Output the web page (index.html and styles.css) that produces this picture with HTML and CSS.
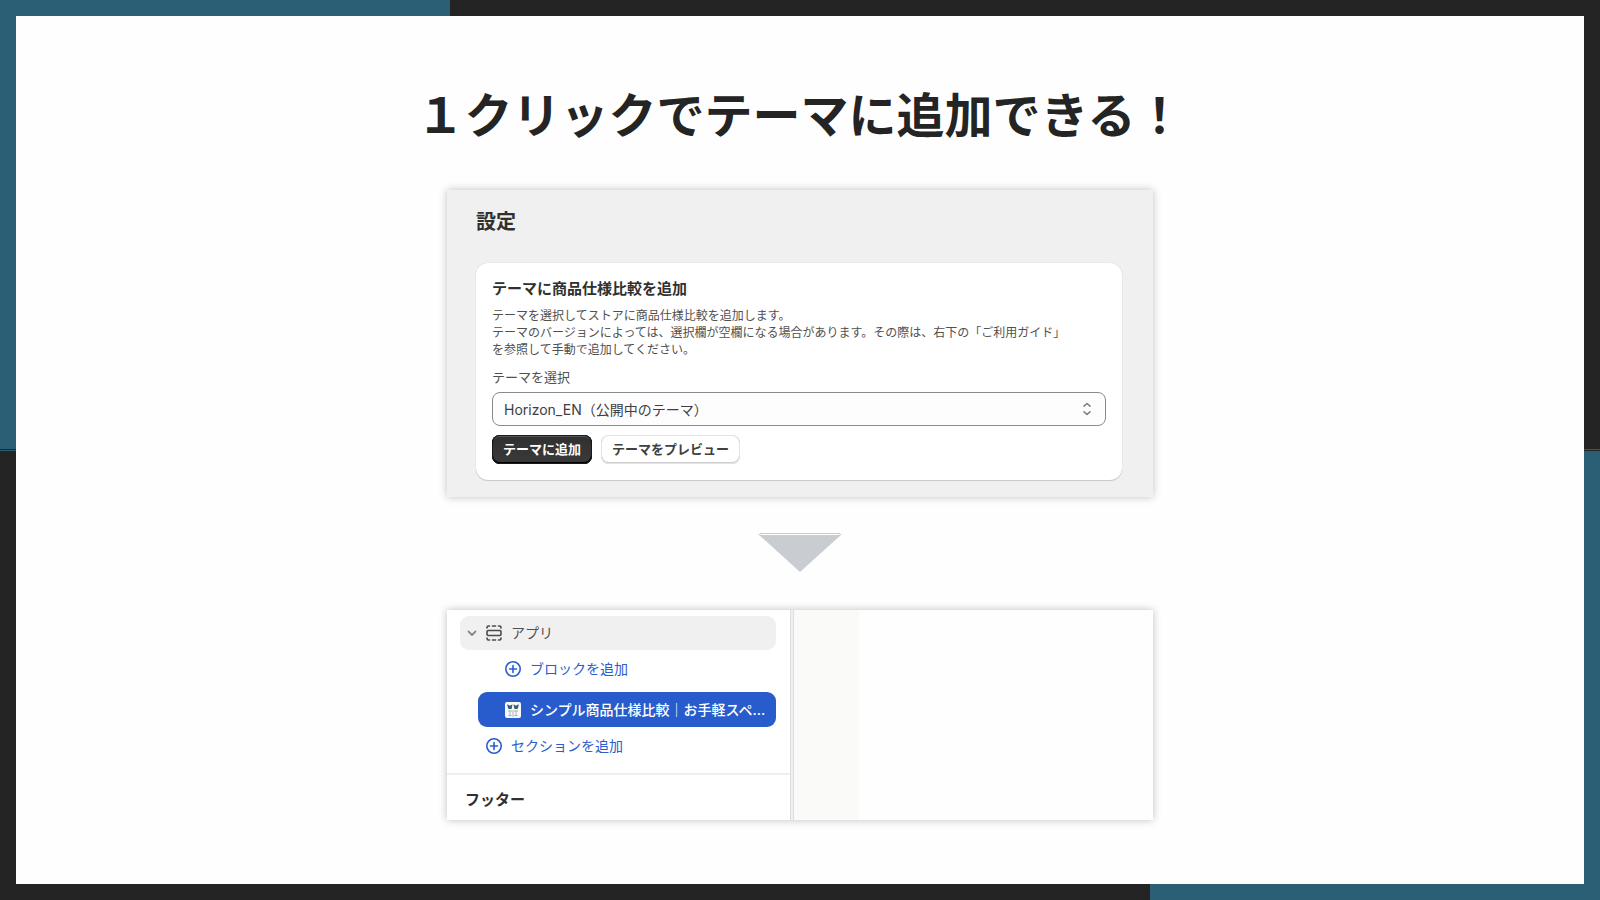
FILE: index.html
```html
<!DOCTYPE html>
<html lang="ja">
<head>
  <meta charset="UTF-8">
  <meta name="viewport" content="width=device-width, initial-scale=1.0">
  <title>１クリックでテーマに追加できる！</title>
  <link rel="stylesheet" href="styles.css">
</head>
<body>
  <main class="slide">
    <h1 class="title">１クリックでテーマに追加できる！</h1>

    <!-- 設定画面 -->
    <section class="panel settings">
      <h2 class="settings-title">設定</h2>
      <div class="card">
        <h3 class="card-title">テーマに商品仕様比較を追加</h3>
        <p class="card-text">テーマを選択してストアに商品仕様比較を追加します。<br>テーマのバージョンによっては、選択欄が空欄になる場合があります。その際は、右下の「ご利用ガイド」<br>を参照して手動で追加してください。</p>
        <label class="label" for="theme">テーマを選択</label>
        <div class="select-wrap">
          <select class="select" id="theme">
            <option>Horizon_EN（公開中のテーマ）</option>
          </select>
          <svg class="select-icon" width="10" height="14" viewBox="0 0 10 14" fill="none" stroke="#808080" stroke-width="1.6" stroke-linecap="round" stroke-linejoin="round">
            <path d="M2 4.2 5 1.5 8 4.2M2 9.8 5 12.5 8 9.8"/>
          </svg>
        </div>
        <div class="buttons">
          <button class="btn btn-dark" type="button">テーマに追加</button>
          <button class="btn" type="button">テーマをプレビュー</button>
        </div>
      </div>
    </section>

    <svg class="arrow" width="84" height="39" viewBox="0 0 84 39" fill="#c9ccd1">
      <path d="M2 0H82V1H2ZM0 1H2L3 2H81L82 1H84L42 39Z"/>
    </svg>

    <!-- テーマエディタ -->
    <section class="panel editor">
      <nav class="sidebar">
        <div class="tree">
          <a href="#app" class="row row-app">
            <svg width="10" height="16" viewBox="0 0 10 16" fill="none" stroke="#8a8a8a" stroke-width="1.8" stroke-linecap="round" stroke-linejoin="round">
              <path d="M1.5 6.5 5 10 8.5 6.5"/>
            </svg>
            <svg width="16" height="16" viewBox="0 0 16 16" fill="none" stroke="#4a4a4a" stroke-width="1.6" stroke-linecap="round">
              <rect x="1" y="5.5" width="14" height="5" rx="1.2"/>
              <path d="M1 3V2.5Q1 1 2.5 1H3.5M6.5 1H9.5M12.5 1H13.5Q15 1 15 2.5V3M1 13V13.5Q1 15 2.5 15H3.5M6.5 15H9.5M12.5 15H13.5Q15 15 15 13.5V13"/>
            </svg>
            <span>アプリ</span>
          </a>
          <a href="#block" class="row row-block">
            <svg width="16" height="16" viewBox="0 0 16 16" fill="none" stroke="#2a5dcf" stroke-width="1.6" stroke-linecap="round">
              <circle cx="8" cy="8" r="7.2"/>
              <path d="M8 4.5V11.5M4.5 8H11.5"/>
            </svg>
            <span>ブロックを追加</span>
          </a>
          <a href="#spec" class="row row-active">
            <svg width="16" height="16" viewBox="0 0 16 16">
              <rect width="16" height="16" rx="2" fill="#f7f8f8"/>
              <path d="M2 2.5 4 3 5 4 6 3 7.5 2.5 6.5 7H3.5ZM8.5 2.5 10 3 11 4 12 3 14 2.5 12.5 7H9.5Z" fill="#2f5d70"/>
              <path d="M3 9H7M3.5 13.500H6.500M9 9H13M9.500 13.500H12.500" stroke="#a5adb2"/>
              <path d="M8 8V15M5 9V13M11 9V13" stroke="#b0b7bb"/>
            </svg>
            <span>シンプル商品仕様比較｜お手軽スペ...</span>
          </a>
          <a href="#section" class="row row-section">
            <svg width="16" height="16" viewBox="0 0 16 16" fill="none" stroke="#2a5dcf" stroke-width="1.6" stroke-linecap="round">
              <circle cx="8" cy="8" r="7.2"/>
              <path d="M8 4.5V11.5M4.5 8H11.5"/>
            </svg>
            <span>セクションを追加</span>
          </a>
        </div>
        <h3 class="footer-title">フッター</h3>
      </nav>
      <div class="preview"></div>
    </section>
  </main>
</body>
</html>
```
FILE: styles.css
```css
* {
  box-sizing: border-box;
  margin: 0;
  padding: 0;
}

/* 左上と右下だけ青い額縁 */
body {
  display: flex;
  min-height: 100vh;
  padding: 16px;
  font-family: Inter, "Noto Sans CJK JP", sans-serif;
  color: #303030;
  background:
    linear-gradient(to top, #2b5f75 1px, #242424 1px, #242424 2px, #2b5f75 2px) left top / 450px calc(50% + 1px) no-repeat,
    linear-gradient(to bottom, #2b5f75 1px, #242424 1px, #242424 2px, #2b5f75 2px) right bottom / 450px calc(50% + 1px) no-repeat,
    #242424;
}

.slide {
  flex: 1;
  display: flex;
  flex-direction: column;
  align-items: center;
  padding: 60px 24px;
  background: #fefefe;
}

.title {
  margin-bottom: 42px;
  font-family: "Noto Sans CJK JP", sans-serif;
  font-size: 48px;
  line-height: 72px;
  font-weight: 700;
  color: #242424;
}

.panel {
  width: 100%;
  max-width: 706px;
  box-shadow: 0 0 8px rgba(0, 0, 0, 0.25);
}

/* 設定 */
.settings {
  padding: 17px 31px 17px 29px;
  background: #f0f0f0;
}

.settings-title {
  margin-bottom: 26px;
  font-size: 20px;
  line-height: 30px;
  font-weight: 700;
}

.card {
  padding: 16px;
  border-radius: 12px;
  background: #fff;
  box-shadow: 0 1px 1px rgba(0, 0, 0, 0.15), 0 0 1px rgba(0, 0, 0, 0.2);
}

.card-title {
  margin-bottom: 8px;
  font-size: 15px;
  line-height: 20px;
  font-weight: 700;
}

.card-text {
  margin-bottom: 9px;
  font-size: 12px;
  line-height: 17px;
  color: #505050;
}

.label {
  display: block;
  margin-bottom: 5px;
  font-size: 13px;
  line-height: 20px;
  color: #505050;
}

.select-wrap {
  position: relative;
  margin-bottom: 9px;
}

.select {
  display: block;
  width: 100%;
  height: 34px;
  padding: 0 32px 0 11px;
  border: 1px solid #8a8a8a;
  border-radius: 8px;
  background: #fdfdfd;
  font-family: inherit;
  font-size: 14px;
  color: #404040;
  appearance: none;
}

.select-icon {
  position: absolute;
  top: 10px;
  right: 14px;
  pointer-events: none;
}

.buttons {
  display: flex;
  gap: 9px;
}

.btn {
  height: 29px;
  padding: 0 11px 2px;
  border: 0;
  border-radius: 8px;
  background: #fff;
  box-shadow: inset 0 0 0 1px #e3e3e3, inset 0 -1px 0 1px #d0d0d0;
  font-family: inherit;
  font-size: 13px;
  line-height: 20px;
  font-weight: 700;
  color: #404040;
}

.btn-dark {
  background: linear-gradient(#303030, #3a3a3a);
  box-shadow: inset 0 0 0 1px #1a1a1a, inset 0 -1px 0 1px #000, inset 0 2px 0 #555;
  color: #fff;
}

.arrow {
  margin: 36px 0 38px;
}

/* テーマエディタ */
.editor {
  display: flex;
  background: #fefefe;
}

.sidebar {
  width: 343px;
  background: #fff;
}

.tree {
  display: flex;
  flex-direction: column;
  padding: 6px 14px 8px 13px;
  border-bottom: 2px solid #efefef;
}

.row {
  display: flex;
  align-items: center;
  gap: 9px;
  height: 38px;
  font-size: 14px;
  line-height: 20px;
  color: #2a5dcf;
  text-decoration: none;
  white-space: nowrap;
}

.row-app {
  height: 34px;
  padding-left: 7px;
  border-radius: 9px;
  background: #f0f0f0;
  color: #505050;
}

.row-block {
  margin-bottom: 4px;
  padding-left: 45px;
}

.row-active {
  height: 35px;
  margin-left: 18px;
  padding-left: 27px;
  border-radius: 9px;
  background: #285ccd;
  font-weight: 500;
  color: #fff;
}

.row-section {
  padding-left: 26px;
}

.footer-title {
  padding: 14px 18px 10px;
  font-size: 15px;
  line-height: 21px;
  font-weight: 700;
}

/* スクロールバーと余白 */
.preview {
  flex: 1;
  background: linear-gradient(to right, #dedede 1px, #f0f0f0 1px, #f0f0f0 3px, #dedede 3px, #dedede 4px, #fafaf8 4px, #fafaf8 69px, transparent 69px);
}
```
